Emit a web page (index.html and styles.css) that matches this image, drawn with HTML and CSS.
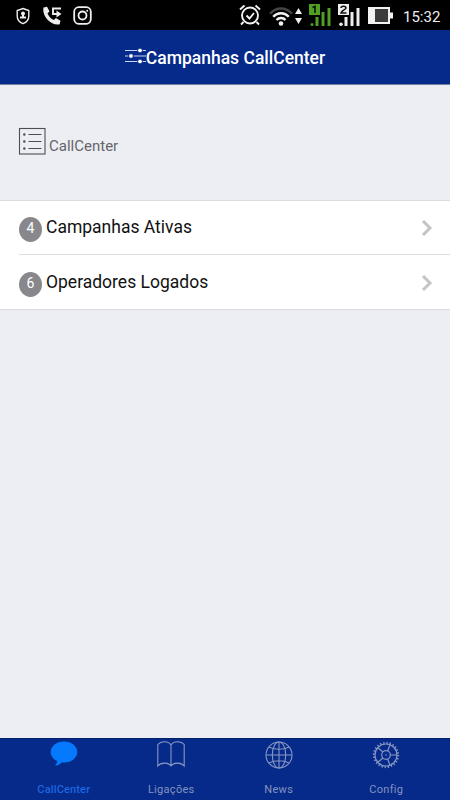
FILE: index.html
```html
<!DOCTYPE html>
<html lang="pt-BR">
<head>
<meta charset="utf-8">
<meta name="viewport" content="width=device-width, initial-scale=1">
<title>Campanhas CallCenter</title>
<link rel="stylesheet" href="styles.css">
</head>
<body>
<div class="status">
  <div class="status-group">
    <svg width="14" height="18" viewBox="0 0 14 18"><path d="M7 1.500 12.800 3.600V9c0 3.700-2.500 6.400-5.800 7.700C3.700 15.400 1.200 12.700 1.200 9V3.600z" fill="none" stroke="#eee" stroke-width="1.400"/><circle cx="7" cy="6.500" r="2" fill="#eee"/><path d="M6 8h2v1.500h2v2H4v-2h2z" fill="#eee"/></svg>
    <svg width="20" height="20" viewBox="0 0 20 20"><path d="M1.500 1.500 5 .8l2.500 4.500L5.500 7.500c1.300 3 3.500 5.200 6.400 6.600l2-2.100 4.600 2.700-.8 3.500C10 20.500-.5 10.500 1.500 1.500z" fill="#eee"/><path d="M19 2.500h-8v5.500H15" fill="none" stroke="#eee" stroke-width="1.900"/><path d="M14.500 4.500 19.500 8l-5 3.500z" fill="#eee"/></svg>
    <svg width="19" height="19" viewBox="0 0 19 19" fill="none" stroke="#eee"><rect x="1.200" y="1.200" width="16.600" height="16.600" rx="4.500" stroke-width="1.800"/><circle cx="9.500" cy="9.500" r="4" stroke-width="1.800"/><circle cx="14.200" cy="4.800" r="1" fill="#eee" stroke="none"/></svg>
  </div>
  <div class="status-group status-right">
    <svg class="alarm" width="22" height="22" viewBox="0 0 22 22" fill="none" stroke="#f2f2f2" stroke-width="1.900"><circle cx="11" cy="11.500" r="8"/><path d="m7.500 11.500 3 3 4.500-5.500M1 5.500l4.500-4M21 5.500l-4.500-4M4.500 18 2 20.500M17.500 18l2.500 2.500"/></svg>
    <svg class="wifi" width="24" height="20" viewBox="0 0 24 20" fill="none" stroke-width="2.400"><path d="M1 6.800C7-.2 17-.2 23 6.800" stroke="#444"/><path d="M4.200 9.700c4.300-4.700 11.300-4.700 15.600 0M7.500 13c2.500-2.700 6.500-2.700 9 0" stroke="#f2f2f2"/><circle cx="12" cy="16.500" r="2.300" fill="#f2f2f2"/></svg>
    <svg class="traffic" width="7" height="18" viewBox="0 0 7 18" fill="#f2f2f2"><path d="M0 7h7L3.500 1zM0 11h7l-3.500 6z"/></svg>
    <svg class="signal-one" width="23" height="24" viewBox="0 0 23 24"><path fill="#4e9f22" d="M0 1h11v11H0zM6.500 14h3v9h-3zM12.500 9h3v14h-3zM18.500 5h3v18h-3z"/><circle cx="3" cy="21.500" r="1.500" fill="#4e9f22"/><path d="m3.500 4.500 2.500-1V10" fill="none" stroke="#111" stroke-width="1.600"/></svg>
    <svg class="signal-two" width="23" height="24" viewBox="0 0 23 24"><path fill="#eee" d="M0 1h11v11H0zM6.500 14h3v9h-3zM12.500 9h3v14h-3zM18.500 5h3v18h-3z"/><circle cx="3" cy="21.300" r="1.800" fill="#eee"/><path d="M3 5c0-2.500 5-2.500 5 0 0 1.500-4.500 2.500-5 5h5.500" fill="none" stroke="#111" stroke-width="1.500"/></svg>
    <svg class="battery" width="25" height="17" viewBox="0 0 25 17"><path fill="#f2f2f2" d="M0 0h22v5.500h3v6h-3V17H0z"/><path fill="#3c3c3c" d="M7 2h13v13H7z"/></svg>
    <span class="clock">15:32</span>
  </div>
</div>
<header class="navbar">
  <svg width="21" height="16" viewBox="0 0 21 16" fill="none" stroke="#c9d6f5"><path d="M0 2.500h21M0 8h21M0 13.500h21"/><g fill="#fff" stroke="#062a89" stroke-width="1"><circle cx="15" cy="2.500" r="2.400"/><circle cx="6" cy="8" r="2.400"/><circle cx="15" cy="13.500" r="2.400"/></g></svg>
  <h1>Campanhas CallCenter</h1>
</header>
<main>
  <div class="section-title">
    <svg width="28" height="28" viewBox="0 0 28 28" fill="none" stroke="#4d4d52"><rect x="1.500" y="1.500" width="25.500" height="25.500" stroke-width="1.100"/><path d="M10.500 7.500h13M10.500 14.500h13M10.500 21.500h13"/><g fill="#4d4d52" stroke="none"><circle cx="6.300" cy="7.500" r="1.200"/><circle cx="6.300" cy="14.500" r="1.200"/><circle cx="6.300" cy="21.500" r="1.200"/></g></svg>
    <span>CallCenter</span>
  </div>
  <div class="list">
    <a class="row"><span class="badge">4</span><span class="label">Campanhas Ativas</span><svg width="12" height="18" viewBox="0 0 12 18"><path d="m2 2 7 7-7 7" fill="none" stroke="#c4c4c6" stroke-width="3"/></svg></a>
    <a class="row"><span class="badge">6</span><span class="label">Operadores Logados</span><svg width="12" height="18" viewBox="0 0 12 18"><path d="m2 2 7 7-7 7" fill="none" stroke="#c4c4c6" stroke-width="3"/></svg></a>
  </div>
</main>
<nav class="tabs">
  <a class="tab active"><svg width="28" height="28" viewBox="0 0 28 28"><path d="M14 .5C6.500 .5.700 5.200.7 11c0 4 2.600 7.300 6.500 9.100-.2 2-1 3.400-2.400 4.500 3 0 5.200-1.300 6.700-3.200.8.100 1.600.1 2.500.1 7.500 0 13.300-4.700 13.300-10.500S21.500.5 14 .5z" fill="#057aff"/></svg><span>CallCenter</span></a>
  <a class="tab"><svg width="28" height="28" viewBox="0 0 28 28" fill="none" stroke="#8796c4" stroke-width="1.100"><path d="M14 4v21M14 4C11.500-.3 4-.3.800 3.500V25c3-3.800 10.500-3.800 13.200 0 2.700-3.800 10.200-3.800 13.200 0V3.500C24-.3 16.500-.3 14 4z"/></svg><span>Ligações</span></a>
  <a class="tab"><svg width="28" height="28" viewBox="0 0 28 28" fill="none" stroke="#8796c4" stroke-width="1.100"><circle cx="14" cy="14" r="13"/><ellipse cx="14" cy="14" rx="6.700" ry="13"/><path d="M14 1v26M1 14h26M4 6c5.500 3 14.500 3 20 0M4 22c5.500-3 14.500-3 20 0"/></svg><span>News</span></a>
  <a class="tab"><svg width="28" height="28" viewBox="0 0 28 28" fill="none" stroke="#8796c4"><circle cx="14" cy="14" r="11" stroke-width="1.200"/><circle cx="14" cy="14" r="12.200" stroke-width="2" stroke-dasharray="1.300 1.895"/><circle cx="14" cy="14" r="4.300" stroke-width="1.200"/><circle cx="14" cy="14" r=".8" fill="#8796c4" stroke="none"/><path d="M18.300 14H25M15.600 10l2.400-6.300M11 11 5.800 6.800M11 17l-5.200 4.200M15.600 18l2.400 6.300" stroke-width="1.200"/></svg><span>Config</span></a>
</nav>
</body>
</html>
```
FILE: styles.css
```css
* {
  box-sizing: border-box;
}

body {
  margin: 0;
  height: 800px;
  display: flex;
  flex-direction: column;
  overflow: hidden;
  background: #edeef3;
  font-family: Roboto, sans-serif;
}

svg {
  display: block;
  flex: none;
}

.status {
  height: 30px;
  display: flex;
  justify-content: space-between;
  align-items: center;
  padding: 0 10px 0 15px;
  background: #000;
}

.status-group {
  display: flex;
  align-items: center;
  gap: 10px;
}

.status-group:first-child {
  gap: 11px;
  padding-left: 1px;
  padding-top: 1px;
}

.status-group:first-child svg:nth-child(2) {
  margin-left: 1px;
}

.status-right {
  gap: 0;
}

.wifi {
  margin: 3px 2px 0 8px;
}

.traffic {
  margin-top: 2px;
}

.signal-one {
  margin: 0 0 0 7px;
}

.signal-two {
  margin: 0 0 0 6px;
}

.battery {
  margin: 1px 10px 0 7px;
}

.clock {
  width: 37px;
  padding-top: 3px;
  font-size: 15px;
  line-height: 18px;
  color: #eee;
}

.navbar {
  height: 55px;
  display: flex;
  align-items: center;
  justify-content: center;
  background: #062a89;
  border-bottom: 1px solid #74809f;
}

.navbar svg {
  margin-top: -2px;
}

.navbar h1 {
  margin: 1px 0 0;
  font-size: 17.5px;
  line-height: 24px;
  font-weight: 500;
  color: #fff;
}

main {
  flex: 1;
}

.section-title {
  height: 115px;
  display: flex;
  align-items: flex-start;
  gap: 3px;
  padding: 42px 18px 0;
  font-size: 15px;
  color: #65656a;
}

.section-title span {
  padding-top: 10px;
  line-height: 18px;
}

.list {
  height: 110px;
  padding-left: 19px;
  background: #fff;
  border-top: 1px solid #dcdce0;
  border-bottom: 1px solid #dcdce0;
}

.row {
  height: 53px;
  display: flex;
  align-items: center;
  padding-right: 17px;
}

.row + .row {
  height: 55px;
  padding-top: 1px;
  border-top: 1px solid #dedee0;
}

.badge {
  width: 23px;
  height: 25px;
  margin-top: 4px;
  border-radius: 50%;
  background: #88888c;
  color: #fff;
  font-size: 14px;
  line-height: 22px;
  text-align: center;
}

.label {
  flex: 1;
  margin: -2px 0 0 4px;
  font-size: 17.5px;
  line-height: 24px;
  color: #111;
}

.tabs {
  height: 62px;
  display: flex;
  padding: 0 10px;
  background: #062a89;
  border-top: 1px solid #051f68;
}

.tab {
  flex: 1;
  display: flex;
  flex-direction: column;
  align-items: center;
  padding-top: 2px;
  font-size: 11px;
  line-height: 14px;
  letter-spacing: .3px;
  color: #8492c0;
}

.tab span {
  margin-top: 14px;
}

.tab.active {
  color: #1b66e0;
  font-weight: 500;
  letter-spacing: .15px;
}
```
